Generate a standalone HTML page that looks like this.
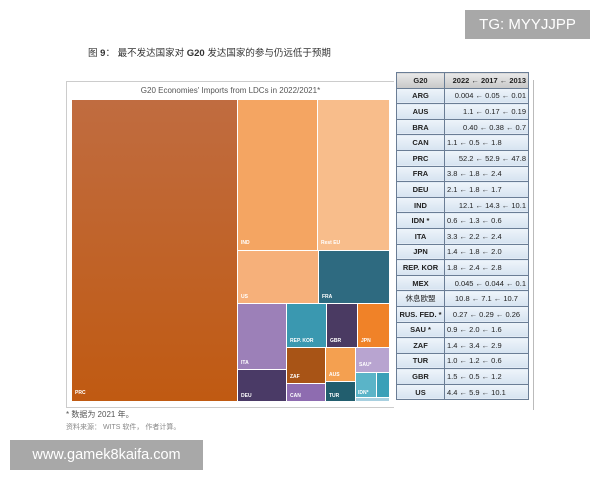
<!DOCTYPE html>
<html><head><meta charset="utf-8"><style>
body{margin:0;width:600px;height:480px;background:#fff;position:relative;overflow:hidden;font-family:"Liberation Sans","Noto Sans CJK SC",sans-serif}
.a{position:absolute}
.t{position:absolute;color:#fff;font-size:5px;font-weight:bold;}
.badge{position:absolute;background:#a8a8a8;color:#fff;font-size:15px;display:flex;align-items:center;justify-content:center}
table{border-collapse:collapse;font-size:7.5px;font-family:"Liberation Sans","Noto Sans CJK SC",sans-serif;color:#222;table-layout:fixed;width:133px}
td{border:1px solid #6a7d95;height:14.6px;padding:0 2px;background:linear-gradient(#eef4fa,#d6e3f0);white-space:nowrap;overflow:hidden}
td:first-child{text-align:center;font-weight:bold;width:43px}
tr.h td{background:linear-gradient(#e8e8e8,#c8c8c8);font-weight:bold;text-align:right}
tr.h td:first-child{text-align:center}
</style></head><body>
<div class="badge" style="left:465px;top:10px;width:125px;height:29px">TG: MYYJJPP</div>
<div class="a" style="left:88px;top:45px;font-size:9.5px;color:#333">图 <b>9</b>：&nbsp;最不发达国家对 <b>G20</b> 发达国家的参与仍远低于预期</div>
<div class="a" style="left:66px;top:81px;width:327px;height:325px;border:1px solid #ccc;border-right:none"></div>
<div class="a" style="left:533px;top:80px;width:1px;height:330px;background:#bbb"></div>
<div class="a" style="left:72px;top:86px;width:317px;text-align:center;font-size:8px;color:#555">G20 Economies' Imports from LDCs in 2022/2021*</div>
<div class="a" style="left:72px;top:100px;width:165px;height:301px;background:linear-gradient(#c06c40,#c05a12)"></div><div class="t" style="left:75px;top:390px">PRC</div>
<div class="a" style="left:238px;top:100px;width:79px;height:150px;background:#f4a562"></div><div class="t" style="left:241px;top:240px">IND</div>
<div class="a" style="left:318px;top:100px;width:71px;height:150px;background:#f8bd8b"></div><div class="t" style="left:321px;top:240px">Rest EU</div>
<div class="a" style="left:238px;top:251px;width:80px;height:52px;background:#f6b07a"></div><div class="t" style="left:241px;top:294px">US</div>
<div class="a" style="left:319px;top:251px;width:70px;height:52px;background:#2e6a80"></div><div class="t" style="left:322px;top:294px">FRA</div>
<div class="a" style="left:238px;top:304px;width:48px;height:65px;background:#9c80b8"></div><div class="t" style="left:241px;top:360px">ITA</div>
<div class="a" style="left:238px;top:370px;width:48px;height:31px;background:#4a3a66"></div><div class="t" style="left:241px;top:393px">DEU</div>
<div class="a" style="left:287px;top:304px;width:39px;height:43px;background:#3a98b0"></div><div class="t" style="left:290px;top:338px">REP. KOR</div>
<div class="a" style="left:327px;top:304px;width:30px;height:43px;background:#4a3a62"></div><div class="t" style="left:330px;top:338px">GBR</div>
<div class="a" style="left:358px;top:304px;width:31px;height:43px;background:#f08228"></div><div class="t" style="left:361px;top:338px">JPN</div>
<div class="a" style="left:287px;top:348px;width:38px;height:35px;background:#a85416"></div><div class="t" style="left:290px;top:374px">ZAF</div>
<div class="a" style="left:287px;top:384px;width:38px;height:17px;background:#8e6cb0"></div><div class="t" style="left:290px;top:393px">CAN</div>
<div class="a" style="left:326px;top:348px;width:29px;height:33px;background:#f4a050"></div><div class="t" style="left:329px;top:372px">AUS</div>
<div class="a" style="left:326px;top:382px;width:29px;height:19px;background:#225e6e"></div><div class="t" style="left:329px;top:393px">TUR</div>
<div class="a" style="left:356px;top:348px;width:33px;height:24px;background:#b8a4d0"></div><div class="t" style="left:359px;top:362px">SAU*</div>
<div class="a" style="left:356px;top:373px;width:20px;height:24px;background:#5ab4c8"></div><div class="t" style="left:358px;top:390px">IDN*</div>
<div class="a" style="left:377px;top:373px;width:12px;height:24px;background:#3aa0b8"></div>
<div class="a" style="left:356px;top:398px;width:33px;height:3px;background:#a8d0e0"></div>
<div class="a" style="left:66px;top:409px;font-size:8px;color:#555">* 数据为 2021 年。</div>
<div class="a" style="left:66px;top:422px;font-size:7px;color:#888">资料来源： WITS 软件， 作者计算。</div>
<table class="a" style="left:396px;top:72px">
<tr class="h"><td>G20</td><td>2022 ← 2017 ← 2013</td></tr>
<tr><td>ARG</td><td style="text-align:right">0.004 ← 0.05 ← 0.01</td></tr>
<tr><td>AUS</td><td style="text-align:right">1.1 ← 0.17 ← 0.19</td></tr>
<tr><td>BRA</td><td style="text-align:right">0.40 ← 0.38 ← 0.7</td></tr>
<tr><td>CAN</td><td>1.1 ← 0.5 ← 1.8</td></tr>
<tr><td>PRC</td><td style="text-align:right">52.2 ← 52.9 ← 47.8</td></tr>
<tr><td>FRA</td><td>3.8 ← 1.8 ← 2.4</td></tr>
<tr><td>DEU</td><td>2.1 ← 1.8 ← 1.7</td></tr>
<tr><td>IND</td><td style="text-align:right">12.1 ← 14.3 ← 10.1</td></tr>
<tr><td>IDN *</td><td>0.6 ← 1.3 ← 0.6</td></tr>
<tr><td>ITA</td><td>3.3 ← 2.2 ← 2.4</td></tr>
<tr><td>JPN</td><td>1.4 ← 1.8 ← 2.0</td></tr>
<tr><td>REP. KOR</td><td>1.8 ← 2.4 ← 2.8</td></tr>
<tr><td>MEX</td><td style="text-align:right">0.045 ← 0.044 ← 0.1</td></tr>
<tr><td style="font-weight:normal">休息欧盟</td><td style="text-align:center">10.8 ← 7.1 ← 10.7</td></tr>
<tr><td>RUS. FED. *</td><td style="text-align:center">0.27 ← 0.29 ← 0.26</td></tr>
<tr><td>SAU *</td><td>0.9 ← 2.0 ← 1.6</td></tr>
<tr><td>ZAF</td><td>1.4 ← 3.4 ← 2.9</td></tr>
<tr><td>TUR</td><td>1.0 ← 1.2 ← 0.6</td></tr>
<tr><td>GBR</td><td>1.5 ← 0.5 ← 1.2</td></tr>
<tr><td>US</td><td>4.4 ← 5.9 ← 10.1</td></tr>
</table>
<div class="badge" style="left:10px;top:440px;width:193px;height:30px;font-size:14.5px">www.gamek8kaifa.com</div>
</body></html>
